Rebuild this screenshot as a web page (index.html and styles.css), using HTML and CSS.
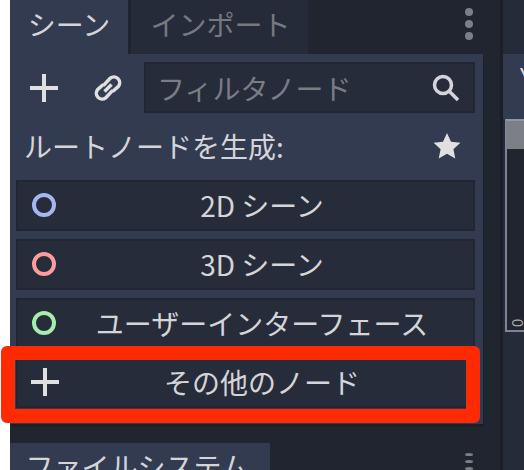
FILE: index.html
```html
<!DOCTYPE html>
<html lang="ja">
<head>
  <meta charset="UTF-8" />
  <title>シーン</title>
  <link rel="stylesheet" href="styles.css">
</head>
<body>
  <div class="editor">
    <div class="left-dock">
      <div class="tabs">
        <div class="tab active">シーン</div>
        <div class="tab">インポート</div>
        <div class="kebab"><i></i><i></i><i></i></div>
      </div>
      <div class="panel">
        <div class="toolbar">
          <svg class="icon-add" viewBox="0 0 28 28"><path d="M0 14H28M14 0V28" /></svg>
          <svg class="icon-link" viewBox="2 2 24 24"><path d="M10 12L16 5.500A5 5 0 0 1 23 12.500L18 17M18 16L12 22.500A5 5 0 0 1 5 15.500L10 11M11 17L17 11" /></svg>
          <div class="filter">
            <span>フィルタノード</span>
            <svg class="icon-search" viewBox="0 0 28 28"><circle cx="11" cy="11" r="8.500" /><path d="M17 17l9 9" /></svg>
          </div>
        </div>
        <div class="root-label">
          <span>ルートノードを生成:</span>
          <svg class="icon-star" viewBox="0 0 28 28"><path d="M14 1l4 8.700 9.400 1.100-7 6.400 1.900 9.300L14 21.800l-8.300 4.700 1.900-9.300-7-6.400L10 9.700z" /></svg>
        </div>
        <div class="node-btn"><b class="ring blue"></b>2D シーン</div>
        <div class="node-btn"><b class="ring red"></b>3D シーン</div>
        <div class="node-btn"><b class="ring green"></b>ユーザーインターフェース</div>
        <div class="node-btn">
          <svg class="icon-add small" viewBox="0 0 28 28"><path d="M0 14H28M14 0V28" /></svg>
          その他のノード
        </div>
      </div>
      <div class="tabs lower">
        <div class="tab active wide">ファイルシステム</div>
        <div class="kebab"><i></i><i></i><i></i></div>
      </div>
    </div>
    <div class="right-dock">
      <div class="right-head"><span class="axis">Y</span></div>
      <div class="right-body">
        <div class="scene-title"></div>
        <div class="ruler"><span>0</span></div>
      </div>
    </div>
  </div>
  <div class="highlight"></div>
</body>
</html>
```

FILE: styles.css
```css
html, body {
  margin: 0;
  height: 470px;
  overflow: hidden;
  background: #fff;
}
body {
  position: relative;
  padding-left: 10px;
  font-family: "Noto Sans CJK JP", "Noto Sans", sans-serif;
  color: #d4d5d9;
}
.editor {
  display: flex;
  width: 514px;
  height: 470px;
  background: #21252f;
  overflow: hidden;
}
.left-dock {
  width: 474px;
  flex: none;
}
.tabs {
  display: flex;
  height: 54px;
}
.tab {
  width: 180px;
  padding-left: 2px;
  font-size: 28px;
  line-height: 49px;
  text-align: center;
  color: #77797f;
  background: #262b3a;
  border-left: 3px solid #1f2330;
  box-sizing: border-box;
}
.tab.active {
  width: 118px;
  padding-left: 0;
  color: #d4d5d9;
  background: #333b50;
  border-left: 0;
}
.tab.wide {
  width: 260px;
  height: 40px;
  padding-right: 6px;
}
.kebab {
  display: flex;
  flex-direction: column;
  gap: 4px;
  margin: 8px 0 0 auto;
  padding-right: 11px;
}
.kebab i {
  width: 8px;
  height: 8px;
  border-radius: 50%;
  background: #7d7f87;
}
.panel {
  width: 473px;
  height: 370px;
  padding: 8px 8px 0 6px;
  box-sizing: border-box;
  background: #333b50;
  box-shadow: 1px 3px 0 #1c1f28;
}
.toolbar {
  display: flex;
  align-items: center;
  height: 51px;
}
.icon-add {
  width: 28px;
  height: 28px;
  margin-left: 14px;
  stroke: #e0e0e0;
  stroke-width: 4;
  fill: none;
  flex: none;
}
.icon-add.small {
  position: absolute;
  left: 13px;
  top: 9px;
  margin: 0;
}
.icon-link {
  width: 28px;
  height: 28px;
  margin-left: 36px;
  stroke: #e0e0e0;
  stroke-width: 3;
  fill: none;
  flex: none;
}
.filter {
  display: flex;
  align-items: center;
  justify-content: space-between;
  width: 331px;
  height: 51px;
  margin-left: 22px;
  padding: 0 13px 0 11px;
  box-sizing: border-box;
  font-size: 28px;
  color: #7b7d85;
  background: #272c3b;
  border: 2px solid #222632;
}
.icon-search {
  width: 28px;
  height: 28px;
  fill: none;
  stroke: #d4d5d9;
  stroke-width: 3.500;
}
.root-label {
  display: flex;
  align-items: center;
  justify-content: space-between;
  height: 67px;
  padding: 0 14px 2px 8px;
  box-sizing: border-box;
  font-size: 28px;
}
.icon-star {
  width: 28px;
  height: 28px;
  fill: #e0e0e0;
}
.node-btn {
  position: relative;
  height: 51px;
  margin-bottom: 8px;
  padding-left: 33px;
  font-size: 28px;
  line-height: 47px;
  text-align: center;
  background: #272c3b;
  border: 2px solid #222632;
  box-sizing: border-box;
}
.ring {
  position: absolute;
  left: 14px;
  top: 11px;
  width: 24px;
  height: 24px;
  border: 4px solid;
  border-radius: 50%;
  box-sizing: border-box;
}
.ring.blue { color: #a5b7f3; }
.ring.red { color: #fc9c9c; }
.ring.green { color: #a5efac; }
.tabs.lower {
  margin-top: 19px;
  height: 27px;
}
.tabs.lower .tab {
  line-height: 47px;
}
.tabs.lower .kebab {
  margin-top: 10px;
}
.right-dock {
  width: 21px;
  margin-left: 19px;
  flex: none;
  background: #262b3a;
  box-shadow: -3px 0 0 #1c1f28;
}
.right-head {
  height: 65px;
  margin-top: 54px;
  background: #333b50;
  overflow: hidden;
  font-size: 22px;
  line-height: 40px;
}
.axis {
  margin-left: 17px;
  color: #e0e0e0;
}
.right-body {
  height: 351px;
  padding-left: 2px;
  background: #262b3a;
}
.scene-title {
  height: 30px;
  background: #7d7f87;
  border-top: 2px solid #8e97aa;
  box-sizing: border-box;
}
.ruler {
  height: 181px;
  background: #21252f;
  border-bottom: 2px solid #7d8498;
  overflow: hidden;
  font-size: 15px;
  color: #aaa;
}
.scene-title, .ruler {
  border-left: 2px solid #7d8498;
}
.ruler span {
  display: block;
  width: 12px;
  margin: 164px 0 0 5px;
  line-height: 20px;
  text-align: center;
  transform: rotate(90deg);
}
.highlight {
  position: absolute;
  left: 1px;
  top: 346px;
  width: 479px;
  height: 77px;
  box-sizing: border-box;
  border: 14px solid #ff2a00;
  border-radius: 6px;
}
```
